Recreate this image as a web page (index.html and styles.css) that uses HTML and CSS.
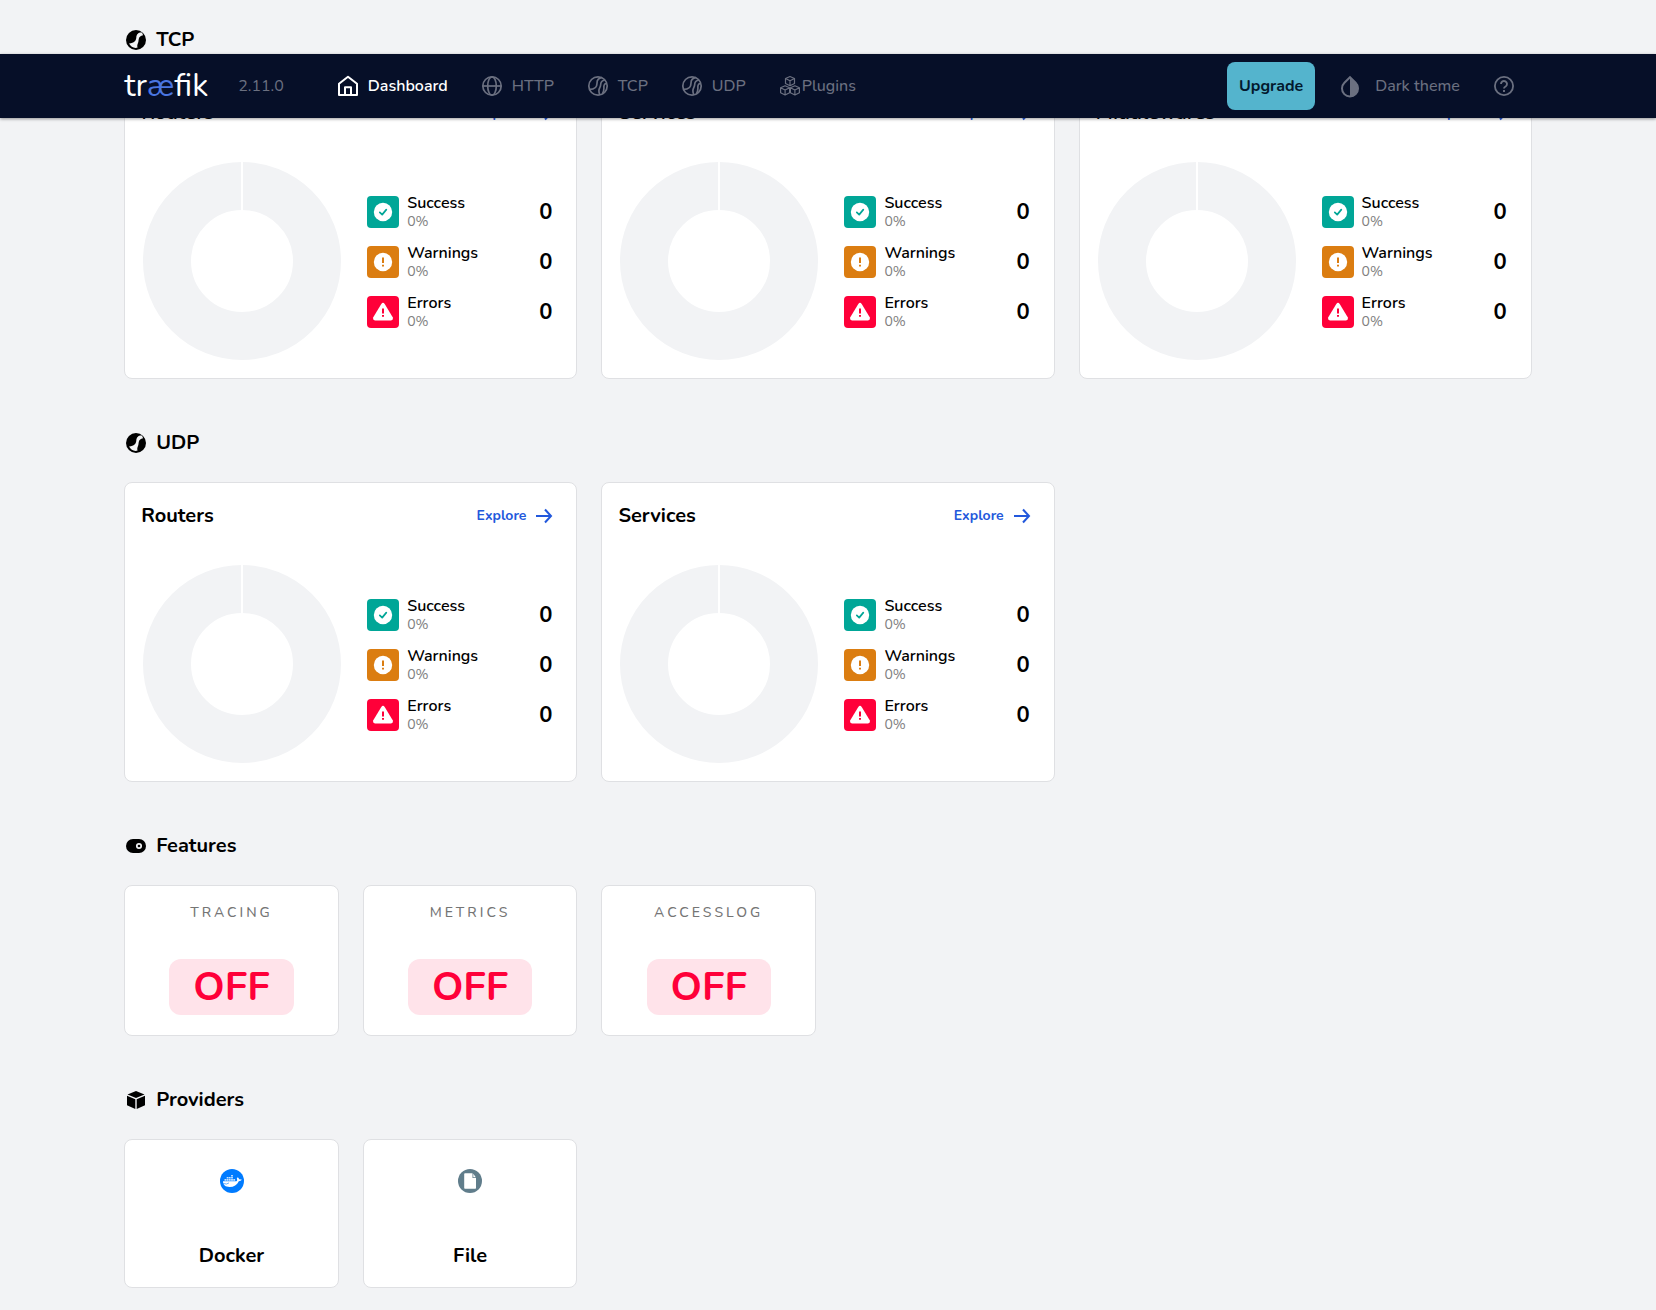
FILE: index.html
```html
<!DOCTYPE html>
<html lang="en">
<head>
<meta charset="utf-8">
<meta name="viewport" content="width=device-width, initial-scale=1">
<title>Traefik</title>
<link rel="stylesheet" href="styles.css">
</head>
<body>
<svg class="sprite" aria-hidden="true">
  <symbol id="i-ball" viewBox="0 0 24 24">
    <circle cx="12" cy="12" r="10"/>
    <path d="M17.600 4.600C14 4.500 12.600 6.600 12.300 9.400C12 12.600 10.500 14.800 5 15.600C6.500 18.400 8.800 19.900 11.600 20L13.600 19.600C13 18 13.300 16.500 14 15C14.700 13.500 14.400 12 14.900 10.500C15.400 8.600 16.600 7.800 19 7.200C18.900 6.400 18.400 5.200 17.600 4.600Z" class="cut"/>
  </symbol>
  <symbol id="i-ball-line" viewBox="0 0 24 24">
    <g fill="none" stroke="currentColor" stroke-width="1.700">
      <circle cx="12" cy="12" r="9.200"/>
      <path d="M15.700 3.700C11.500 4.300 11 6.600 11 9.200C11 13 9 15.300 3.600 15.300M18.800 6C15.500 6.500 14.700 8.500 14.600 11C14.500 13.500 12.900 14 12.900 16.800C12.900 18.800 13.200 20 14 21M20.900 9.400C17.900 9.500 17.700 12 17.900 14.200C18 16.200 17.400 18 16.400 20"/>
    </g>
  </symbol>
  <symbol id="i-donut" viewBox="0 0 200 200">
    <circle cx="100" cy="100" r="75" fill="none" stroke="#f2f3f5" stroke-width="48"/>
    <rect x="99" y="0" width="2" height="50" fill="#fff"/>
  </symbol>
  <symbol id="i-ok" viewBox="0 0 24 24">
    <circle cx="12" cy="12" r="9.200" fill="#fff"/>
    <path d="M8.800 12.300L11.200 14.600L15.300 9.600" fill="none" stroke="#00a697" stroke-width="1.700" stroke-linecap="round" stroke-linejoin="round"/>
  </symbol>
  <symbol id="i-warn" viewBox="0 0 24 24">
    <circle cx="12" cy="12" r="9.200" fill="#fff"/>
    <path d="M12 7.500V13M12 14.800V16.500" stroke="#db7d11" stroke-width="2"/>
  </symbol>
  <symbol id="i-err" viewBox="0 0 24 24">
    <path d="M10.300 4Q12 1.700 13.700 4L21.700 17.300Q22.500 20.200 20 20.400H4Q1.500 20.200 2.300 17.300Z" fill="#fff"/>
    <path d="M12 8.500V13.500M12 15V16.700" stroke="#ff0039" stroke-width="2"/>
  </symbol>
  <symbol id="i-arrow" viewBox="0 0 24 24">
    <path d="M4 12H19M13 5.500L19 12L13 18.500" fill="none" stroke="currentColor" stroke-width="2"/>
  </symbol>
</svg>

<header class="topbar">
  <div class="wrap topbar-row">
    <a class="logo" href="#">tr<span>æ</span>fik</a>
    <span class="version">2.11.0</span>
    <nav class="nav">
      <a class="nav-link is-active" href="#">
        <svg class="icon" viewBox="0 0 24 24"><path d="M3 21V9.700L12 2.700L21 9.700V21ZM9 21V13.300H15V21" fill="none" stroke="currentColor" stroke-width="2" stroke-linejoin="round"/></svg>
        Dashboard</a>
      <a class="nav-link" href="#">
        <svg class="icon" viewBox="0 0 24 24"><g fill="none" stroke="currentColor" stroke-width="1.700"><circle cx="12" cy="12" r="9.200"/><ellipse cx="12" cy="12" rx="4.300" ry="9.200"/><path d="M3 12H21"/></g></svg>
        HTTP</a>
      <a class="nav-link" href="#"><svg class="icon"><use href="#i-ball-line"/></svg>TCP</a>
      <a class="nav-link" href="#"><svg class="icon"><use href="#i-ball-line"/></svg>UDP</a>
      <a class="nav-link nav-link-tight" href="#">
        <svg class="icon" viewBox="0 0 24 24"><g fill="none" stroke="currentColor" stroke-width="1.200" stroke-linejoin="round"><path id="cube" d="M12 2.500L16.500 4.500V9.500L12 11.700L7.500 9.500V4.500ZM7.500 4.500L12 6.700L16.500 4.500M12 6.700V11.700"/><use href="#cube" x="-4.900" y="9.300"/><use href="#cube" x="4.900" y="9.300"/></g></svg>
        Plugins</a>
    </nav>
    <div class="tools">
      <button class="upgrade" type="button">Upgrade</button>
      <button class="tool" type="button">
        <svg class="icon" viewBox="0 0 24 24"><path d="M12 3.200L17.600 8.800A8 8 0 1 1 6.400 8.800Z" fill="none" stroke="currentColor" stroke-width="2"/><path d="M12 2.500L18 8.600A8.600 8.600 0 0 1 12 23Z" fill="currentColor"/></svg>
        Dark theme</button>
      <button class="tool" type="button" aria-label="Help">
        <svg class="icon" viewBox="0 0 24 24"><circle cx="12" cy="12" r="9.100" fill="none" stroke="currentColor" stroke-width="1.800"/><path d="M9 10A3 3 0 1 1 13.600 12.500Q12 13.300 12 14.600M12 16V18" fill="none" stroke="currentColor" stroke-width="1.900"/></svg>
      </button>
    </div>
  </div>
</header>

<main class="wrap">
  <section>
    <h2 class="section-title"><svg class="icon"><use href="#i-ball"/></svg>TCP</h2>
    <div class="grid grid-3">
      <article class="card stat">
        <div class="stat-head"><h3>Routers</h3><a class="explore" href="#">Explore<svg class="icon"><use href="#i-arrow"/></svg></a></div>
        <div class="stat-body">
          <svg class="donut"><use href="#i-donut"/></svg>
          <ul class="legend">
            <li><span class="chip chip-ok"><svg><use href="#i-ok"/></svg></span><div class="label">Success<small>0%</small></div><strong>0</strong></li>
            <li><span class="chip chip-warn"><svg><use href="#i-warn"/></svg></span><div class="label">Warnings<small>0%</small></div><strong>0</strong></li>
            <li><span class="chip chip-err"><svg><use href="#i-err"/></svg></span><div class="label">Errors<small>0%</small></div><strong>0</strong></li>
          </ul>
        </div>
      </article>
      <article class="card stat">
        <div class="stat-head"><h3>Services</h3><a class="explore" href="#">Explore<svg class="icon"><use href="#i-arrow"/></svg></a></div>
        <div class="stat-body">
          <svg class="donut"><use href="#i-donut"/></svg>
          <ul class="legend">
            <li><span class="chip chip-ok"><svg><use href="#i-ok"/></svg></span><div class="label">Success<small>0%</small></div><strong>0</strong></li>
            <li><span class="chip chip-warn"><svg><use href="#i-warn"/></svg></span><div class="label">Warnings<small>0%</small></div><strong>0</strong></li>
            <li><span class="chip chip-err"><svg><use href="#i-err"/></svg></span><div class="label">Errors<small>0%</small></div><strong>0</strong></li>
          </ul>
        </div>
      </article>
      <article class="card stat">
        <div class="stat-head"><h3>Middlewares</h3><a class="explore" href="#">Explore<svg class="icon"><use href="#i-arrow"/></svg></a></div>
        <div class="stat-body">
          <svg class="donut"><use href="#i-donut"/></svg>
          <ul class="legend">
            <li><span class="chip chip-ok"><svg><use href="#i-ok"/></svg></span><div class="label">Success<small>0%</small></div><strong>0</strong></li>
            <li><span class="chip chip-warn"><svg><use href="#i-warn"/></svg></span><div class="label">Warnings<small>0%</small></div><strong>0</strong></li>
            <li><span class="chip chip-err"><svg><use href="#i-err"/></svg></span><div class="label">Errors<small>0%</small></div><strong>0</strong></li>
          </ul>
        </div>
      </article>
    </div>
  </section>

  <section>
    <h2 class="section-title"><svg class="icon"><use href="#i-ball"/></svg>UDP</h2>
    <div class="grid grid-3">
      <article class="card stat">
        <div class="stat-head"><h3>Routers</h3><a class="explore" href="#">Explore<svg class="icon"><use href="#i-arrow"/></svg></a></div>
        <div class="stat-body">
          <svg class="donut"><use href="#i-donut"/></svg>
          <ul class="legend">
            <li><span class="chip chip-ok"><svg><use href="#i-ok"/></svg></span><div class="label">Success<small>0%</small></div><strong>0</strong></li>
            <li><span class="chip chip-warn"><svg><use href="#i-warn"/></svg></span><div class="label">Warnings<small>0%</small></div><strong>0</strong></li>
            <li><span class="chip chip-err"><svg><use href="#i-err"/></svg></span><div class="label">Errors<small>0%</small></div><strong>0</strong></li>
          </ul>
        </div>
      </article>
      <article class="card stat">
        <div class="stat-head"><h3>Services</h3><a class="explore" href="#">Explore<svg class="icon"><use href="#i-arrow"/></svg></a></div>
        <div class="stat-body">
          <svg class="donut"><use href="#i-donut"/></svg>
          <ul class="legend">
            <li><span class="chip chip-ok"><svg><use href="#i-ok"/></svg></span><div class="label">Success<small>0%</small></div><strong>0</strong></li>
            <li><span class="chip chip-warn"><svg><use href="#i-warn"/></svg></span><div class="label">Warnings<small>0%</small></div><strong>0</strong></li>
            <li><span class="chip chip-err"><svg><use href="#i-err"/></svg></span><div class="label">Errors<small>0%</small></div><strong>0</strong></li>
          </ul>
        </div>
      </article>
    </div>
  </section>

  <section>
    <h2 class="section-title">
      <svg class="icon" viewBox="0 0 24 24"><rect x="2" y="5" width="20" height="14" rx="7"/><circle cx="15" cy="12" r="2.200" fill="none" stroke="#f2f3f5" stroke-width="1.700"/></svg>
      Features</h2>
    <div class="grid grid-6">
      <article class="card tile"><h3 class="feature-name">TRACING</h3><span class="badge">OFF</span></article>
      <article class="card tile"><h3 class="feature-name">METRICS</h3><span class="badge">OFF</span></article>
      <article class="card tile"><h3 class="feature-name">ACCESSLOG</h3><span class="badge">OFF</span></article>
    </div>
  </section>

  <section>
    <h2 class="section-title">
      <svg class="icon" viewBox="0 0 24 24"><path d="M12 3L20.500 6.400L12 9.900L3.500 6.400ZM3 7.800L11.300 11.200V21L3 17.300ZM21 7.800L12.700 11.200V21L21 17.300Z"/></svg>
      Providers</h2>
    <div class="grid grid-6">
      <article class="card tile provider">
        <svg class="icon" viewBox="0 0 24 24"><circle cx="12" cy="12" r="12" fill="#007bff"/><path d="M3 12.300H16.300C17.300 12 17.500 11 16.800 9.500L17.700 8.200C18.700 8.900 19 9.700 19 10.200C20.200 10 21.200 10.300 21.800 10.600C21.200 11.800 20 12.200 18.800 12.200C17 16 14 18 9.500 18C5.500 18 3 16 3 12.300Z" fill="#fff"/><path d="M4.500 9.900H6.300V11.700H4.500ZM6.700 9.900H8.500V11.700H6.700ZM8.900 9.900H10.700V11.700H8.900ZM11.100 9.900H12.900V11.700H11.100ZM13.300 9.900H15.100V11.700H13.300ZM6.700 7.900H8.500V9.600H6.700ZM8.900 7.900H10.700V9.600H8.900ZM11.100 7.900H12.900V9.600H11.100ZM11.100 6H12.900V7.600H11.100Z" fill="#c6e2ff"/><path d="M3.200 14.500Q7 15.800 9 13.900" fill="none" stroke="#007bff" stroke-width=".6"/></svg>
        <h3>Docker</h3>
      </article>
      <article class="card tile provider">
        <svg class="icon" viewBox="0 0 24 24"><circle cx="12" cy="12" r="12" fill="#607d8b"/><path d="M7 4.200H14.500V9H18V19Q18 19.700 17.300 19.700H7Q6.200 19.700 6.200 19V5Q6.200 4.200 7 4.200ZM15.300 4.700L17.800 8.200H15.300Z" fill="#fff"/></svg>
        <h3>File</h3>
      </article>
    </div>
  </section>
</main>
</body>
</html>
```
FILE: styles.css
```css
*, *::before, *::after { box-sizing: border-box; }

body {
  margin: 0;
  background: #f2f3f5;
  color: #000;
  font: 400 16px/20px Nunito, Lato, sans-serif;
}

h2, h3, ul { margin: 0; padding: 0; }
a { color: inherit; text-decoration: none; }
button { border: 0; background: none; color: inherit; font: inherit; cursor: pointer; }
svg { display: block; flex: none; }

.sprite { position: absolute; width: 0; height: 0; }
.icon { width: 24px; height: 24px; fill: currentColor; }
.cut { fill: #f2f3f5; }
.wrap { width: 85%; margin: 0 auto; }

/* Floating top bar */
.topbar {
  position: absolute;
  top: 54px;
  left: 0;
  right: 0;
  z-index: 10;
  background: #060f28;
  color: #6b7080;
  box-shadow: 0 1px 3px rgba(0, 0, 0, .4);
}
.topbar-row { display: flex; align-items: center; height: 64px; }
.logo { color: #fff; font-size: 32px; line-height: 40px; }
.logo span { color: #4a76e0; }
.version { margin-left: 30px; }
.nav { display: flex; gap: 32px; margin-left: 52px; font-weight: 500; }
.nav-link { display: flex; align-items: center; gap: 8px; }
.nav-link-tight { gap: 0; }
.is-active { color: #fff; font-weight: 600; }
.tools { display: flex; align-items: center; margin-left: auto; }
.upgrade {
  height: 48px;
  padding: 0 12px;
  margin-right: 7px;
  border-radius: 8px;
  background: #54b4cd;
  color: #03192d;
  font-weight: 700;
}
.tool { display: flex; align-items: center; gap: 13px; height: 48px; padding: 0 16px; font-weight: 500; }

/* Sections */
section { padding-top: 50px; }
section:first-child { padding-top: 26px; }
.section-title {
  display: flex;
  align-items: center;
  gap: 8px;
  margin-bottom: 25px;
  font-size: 20px;
  line-height: 28px;
  font-weight: 700;
}
.grid { display: grid; gap: 24px; }
.grid-3 { grid-template-columns: repeat(3, 1fr); }
.grid-6 { grid-template-columns: repeat(6, 1fr); }
.card { border: 1px solid #dfe0e3; border-radius: 8px; background: #fff; }
.card h3 { font-size: 20px; line-height: 28px; }

/* Status cards */
.stat { padding: 19px 16px 17px; }
.stat-head { display: flex; align-items: center; justify-content: space-between; padding-right: 4px; }
.explore { display: flex; align-items: center; gap: 6px; color: #2258dc; font-size: 14px; font-weight: 700; }
.stat-body { display: flex; align-items: center; gap: 25px; padding: 34px 0 0 1px; }
.donut { width: 200px; height: 200px; }
.legend { flex: 1; display: grid; gap: 10px; padding: 1px 8px 0 0; list-style: none; }
.legend li { display: flex; align-items: center; gap: 8px; height: 40px; }
.label { flex: 1; font-weight: 600; }
.label small { display: block; color: #808080; font-size: 14px; line-height: 18px; font-weight: 400; }
.legend strong { font-size: 22px; }
.chip { display: grid; place-items: center; width: 32px; height: 32px; border-radius: 4px; }
.chip svg { width: 24px; height: 24px; }
.chip-ok { background: #00a697; }
.chip-warn { background: #db7d11; }
.chip-err { background: #ff0039; }

/* Small tiles */
.tile { display: flex; flex-direction: column; align-items: center; padding: 16px; }
.tile .feature-name { color: #757575; font-size: 14px; line-height: 22px; font-weight: 500; letter-spacing: 3px; }
.badge {
  margin: 35px 0 4px;
  padding: 0 24px;
  border-radius: 12px;
  background: #ffe3ea;
  color: #ff0039;
  font-size: 40px;
  line-height: 56px;
  font-weight: 700;
}
.provider { padding: 29px 16px 17px; }
.provider h3 { margin-top: 49px; }
```
